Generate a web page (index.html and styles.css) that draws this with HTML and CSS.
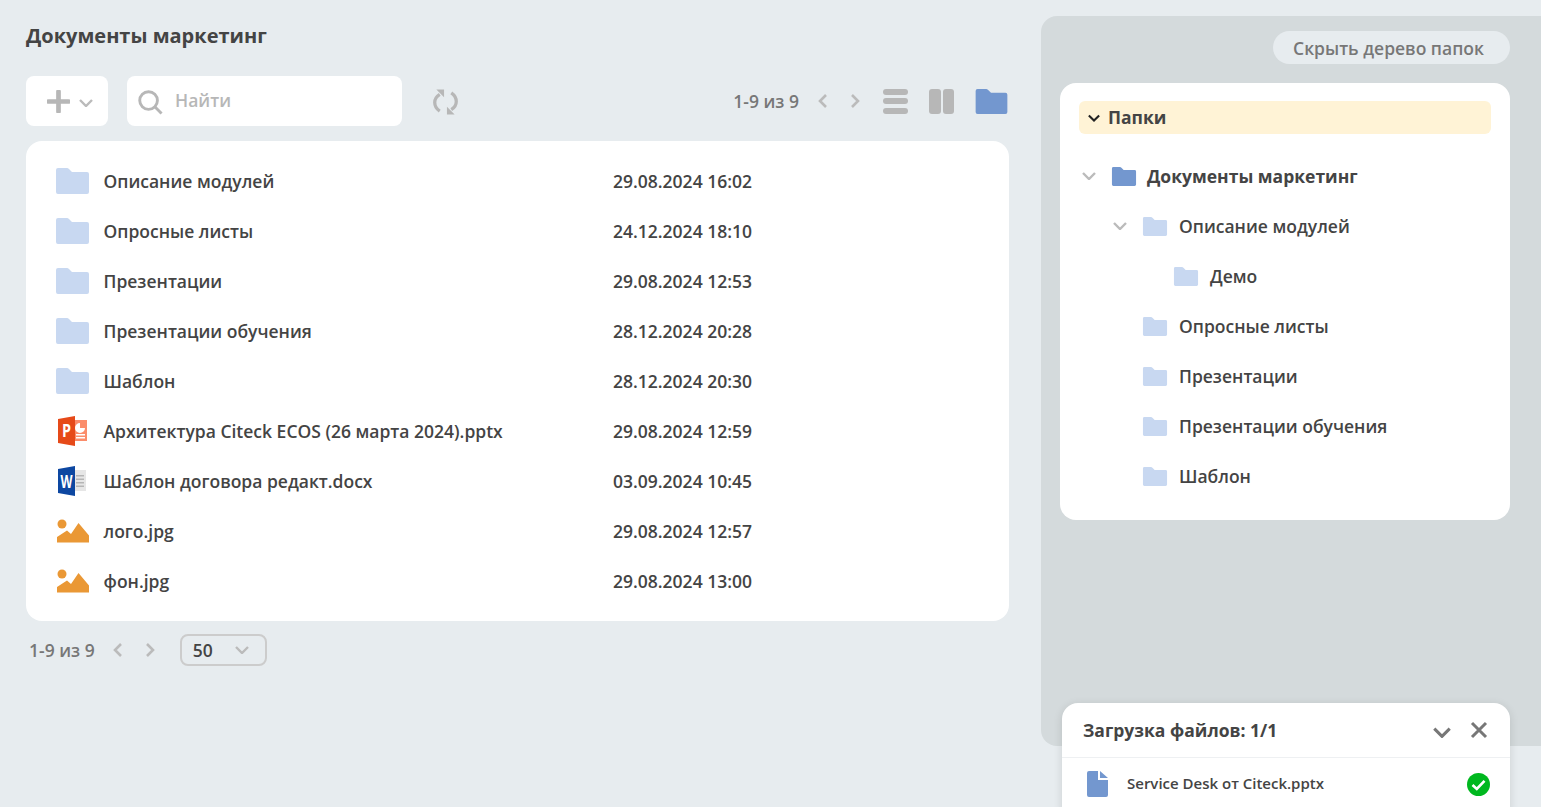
FILE: index.html
```html
<!DOCTYPE html>
<html lang="ru">
<head>
  <meta charset="UTF-8" />
  <meta name="viewport" content="width=device-width, initial-scale=1.0"/>
  <title>Документы маркетинг</title>
  <link rel="stylesheet" href="styles.css">
</head>
<body>
  <svg class="defs" width="0" height="0">
    <symbol id="folder" viewBox="0 0 33 26"><path d="M0 2Q0 0 2 0H11Q12 0 13 1L16 4H31Q33 4 33 6V24Q33 26 31 26H2Q0 26 0 24Z"/></symbol>
    <symbol id="image" viewBox="0 0 32 24"><circle cx="5" cy="5" r="4.500"/><path d="M0 23.500V18L10 11.500L14 15L21.500 4L32 16.500V23.500Z"/></symbol>
    <symbol id="chev-down" viewBox="0 0 14 8"><path d="M1 1L7 7L13 1" fill="none" stroke="currentColor" stroke-width="2.400"/></symbol>
    <symbol id="chev-left" viewBox="0 0 9 14"><path d="M8 1L2 7L8 13" fill="none" stroke="currentColor" stroke-width="2.600"/></symbol>
    <symbol id="chev-right" viewBox="0 0 9 14"><path d="M1 1L7 7L1 13" fill="none" stroke="currentColor" stroke-width="2.600"/></symbol>
  </svg>

  <main class="content">
    <h1 class="page-title">Документы маркетинг</h1>

    <div class="toolbar">
      <button class="add-btn">
        <svg class="plus" viewBox="0 0 22 22"><path d="M11 1.500V20.500M1.500 11H20.500" stroke="currentColor" stroke-width="4.500" stroke-linecap="round"/></svg>
        <svg class="chev chev-add"><use href="#chev-down"/></svg>
      </button>
      <div class="search">
        <svg class="search-icon" viewBox="0 0 26 26"><circle cx="11" cy="11" r="9.200" fill="none" stroke="currentColor" stroke-width="3"/><path d="M17.500 17.500L24.500 24.500" stroke="currentColor" stroke-width="3"/></svg>
        <span>Найти</span>
      </div>
      <svg class="refresh" viewBox="0 0 26 26">
        <path d="M7 5C3 7.500 1.800 10.500 1.800 13.500C1.800 17 3.500 20 7 22.500" fill="none" stroke="currentColor" stroke-width="3.400"/>
        <path d="M19 21C23 18.500 24.200 15.500 24.200 12.500C24.200 9 22.500 6 19 3.500" fill="none" stroke="currentColor" stroke-width="3.400"/>
        <path d="M3.500 0H11.500V8Z M22.500 26H14.500V18Z" fill="currentColor"/>
      </svg>
      <div class="toolbar-right">
        <span class="pager-text">1-9 из 9</span>
        <svg class="chev-h pager-first"><use href="#chev-left"/></svg>
        <svg class="chev-h pager-next"><use href="#chev-right"/></svg>
        <div class="view-list"><i></i><i></i><i></i></div>
        <div class="view-cols"><i></i><i></i></div>
        <svg class="view-folder"><use href="#folder"/></svg>
      </div>
    </div>

    <div class="card file-list">
      <div class="file-row"><svg class="ficon folder-light"><use href="#folder"/></svg><span class="file-name">Описание модулей</span><span class="file-date">29.08.2024 16:02</span></div>
      <div class="file-row"><svg class="ficon folder-light"><use href="#folder"/></svg><span class="file-name">Опросные листы</span><span class="file-date">24.12.2024 18:10</span></div>
      <div class="file-row"><svg class="ficon folder-light"><use href="#folder"/></svg><span class="file-name">Презентации</span><span class="file-date">29.08.2024 12:53</span></div>
      <div class="file-row"><svg class="ficon folder-light"><use href="#folder"/></svg><span class="file-name">Презентации обучения</span><span class="file-date">28.12.2024 20:28</span></div>
      <div class="file-row"><svg class="ficon folder-light"><use href="#folder"/></svg><span class="file-name">Шаблон</span><span class="file-date">28.12.2024 20:30</span></div>
      <div class="file-row">
        <svg class="ficon office" viewBox="0 0 33 30">
          <path d="M18 4H31V25H18Z" fill="#fb8d6b"/>
          <path d="M20 18H29V19.500H20ZM20 21H29V22.500H20Z" fill="#fff"/>
          <path d="M24 7A5 5 0 1 0 29 12H24Z" fill="#fff"/>
          <path d="M2 3L19 0V30L2 27Z" fill="#e64a19"/>
          <text x="6" y="21" class="office-letter" textLength="9" lengthAdjust="spacingAndGlyphs">P</text>
        </svg>
        <span class="file-name">Архитектура Citeck ECOS (26 марта 2024).pptx</span><span class="file-date">29.08.2024 12:59</span>
      </div>
      <div class="file-row">
        <svg class="ficon office" viewBox="0 0 33 30">
          <path d="M18 4H30V25H18Z" fill="#e6e6e6"/>
          <path d="M20 9H28V10.500H20ZM20 12.500H28V14H20ZM20 16H28V17.500H20ZM20 19.500H28V21H20Z" fill="#b5b5b5"/>
          <path d="M2 3L19 0V30L2 27Z" fill="#0d47a1"/>
          <text x="4.500" y="21.500" class="office-letter word-letter" textLength="12" lengthAdjust="spacingAndGlyphs">W</text>
        </svg>
        <span class="file-name">Шаблон договора редакт.docx</span><span class="file-date">03.09.2024 10:45</span>
      </div>
      <div class="file-row"><svg class="ficon image"><use href="#image"/></svg><span class="file-name">лого.jpg</span><span class="file-date">29.08.2024 12:57</span></div>
      <div class="file-row"><svg class="ficon image"><use href="#image"/></svg><span class="file-name">фон.jpg</span><span class="file-date">29.08.2024 13:00</span></div>
    </div>

    <div class="footer-pager">
      <span class="pager-text">1-9 из 9</span>
      <svg class="chev-h pager-first"><use href="#chev-left"/></svg>
      <svg class="chev-h pager-next"><use href="#chev-right"/></svg>
      <div class="page-size"><span>50</span><svg class="chev chev-size"><use href="#chev-down"/></svg></div>
    </div>
  </main>

  <aside class="side">
    <div class="side-top"><button class="hide-tree">Скрыть дерево папок</button></div>
    <div class="card tree">
      <div class="tree-head"><svg class="chev-head"><use href="#chev-down"/></svg><span class="tree-title">Папки</span></div>
      <ul class="tree-list">
        <li class="tree-row lvl0"><svg class="chev tree-chev"><use href="#chev-down"/></svg><svg class="tree-folder folder-dark"><use href="#folder"/></svg><b>Документы маркетинг</b></li>
        <li class="tree-row lvl1"><svg class="chev tree-chev"><use href="#chev-down"/></svg><svg class="tree-folder folder-light"><use href="#folder"/></svg>Описание модулей</li>
        <li class="tree-row lvl2"><span class="tree-chev"></span><svg class="tree-folder folder-light"><use href="#folder"/></svg>Демо</li>
        <li class="tree-row lvl1"><span class="tree-chev"></span><svg class="tree-folder folder-light"><use href="#folder"/></svg>Опросные листы</li>
        <li class="tree-row lvl1"><span class="tree-chev"></span><svg class="tree-folder folder-light"><use href="#folder"/></svg>Презентации</li>
        <li class="tree-row lvl1"><span class="tree-chev"></span><svg class="tree-folder folder-light"><use href="#folder"/></svg>Презентации обучения</li>
        <li class="tree-row lvl1"><span class="tree-chev"></span><svg class="tree-folder folder-light"><use href="#folder"/></svg>Шаблон</li>
      </ul>
    </div>
  </aside>

  <div class="uploads">
    <div class="uploads-head">
      <span>Загрузка файлов: 1/1</span>
      <svg class="uploads-chev"><use href="#chev-down"/></svg>
      <svg class="uploads-close" viewBox="0 0 18 18"><path d="M2 2L16 16M16 2L2 16" stroke="currentColor" stroke-width="3"/></svg>
    </div>
    <div class="uploads-row">
      <svg class="doc-icon" viewBox="0 0 21 26"><path d="M2 0H11V9H21V24Q21 26 19 26H2Q0 26 0 24V2Q0 0 2 0ZM13 0L21 7H13Z"/></svg>
      <span class="uploads-name">Service Desk от Citeck.pptx</span>
      <svg class="ok-icon" viewBox="0 0 23 23"><circle cx="11.500" cy="11.500" r="11.500" fill="#00b81f"/><path d="M5.500 12L9.800 16L17.500 7.800" fill="none" stroke="#fff" stroke-width="2.600"/></svg>
    </div>
  </div>
</body>
</html>
```
FILE: styles.css
```css
* {
  box-sizing: border-box;
}
html, body {
  height: 100%;
}
body {
  margin: 0;
  height: 807px;
  overflow: hidden;
  background-color: #e7ecef;
  color: #444;
  font-family: 'Open Sans', sans-serif;
  font-size: 17.500px;
  display: flex;
  position: relative;
}
.defs {
  position: absolute;
}
.content {
  width: 983px;
  margin-left: 26px;
  flex: none;
}
.page-title {
  margin: 22px 0 0;
  font-size: 20px;
  line-height: 28px;
  font-weight: 700;
  color: #444;
}
.toolbar {
  display: flex;
  align-items: center;
  margin-top: 26px;
  height: 50px;
}
.add-btn {
  width: 82px;
  height: 50px;
  border: none;
  border-radius: 8px;
  background: #fff;
  color: #b7b7b7;
  padding: 0 0 0 21px;
  display: flex;
  align-items: center;
}
.plus {
  width: 23px;
  height: 23px;
}
.chev {
  color: #bbb;
}
.chev-add {
  width: 14px;
  height: 8px;
  margin: 3px 0 0 9px;
}
.search {
  width: 275px;
  height: 50px;
  margin-left: 19px;
  padding-left: 11px;
  border-radius: 8px;
  background: #fff;
  color: #b7b7b7;
  display: flex;
  align-items: center;
}
.search-icon {
  width: 25px;
  height: 25px;
  margin-top: 2px;
}
.search span {
  margin: -2px 0 0 12px;
  font-weight: 600;
}
.refresh {
  width: 25px;
  height: 26px;
  margin: 2px 0 0 31px;
  color: #b7b7b7;
}
.toolbar-right {
  margin-left: auto;
  display: flex;
  align-items: center;
  padding-right: 1px;
}
.pager-text {
  color: #777;
  font-weight: 600;
}
.chev-h {
  width: 9px;
  height: 14px;
  color: #bbb;
}
.pager-first {
  margin-left: 19px;
}
.pager-next {
  margin-left: 24px;
}
.view-list {
  width: 25px;
  height: 25px;
  margin-left: 23px;
  display: flex;
  flex-direction: column;
  justify-content: space-between;
}
.view-list i {
  height: 6px;
  border-radius: 3px;
  background: #b7b7b7;
}
.view-cols {
  width: 25px;
  height: 25px;
  margin-left: 21px;
  display: flex;
  justify-content: space-between;
}
.view-cols i {
  width: 11.500px;
  border-radius: 3px;
  background: #b7b7b7;
}
.view-folder {
  width: 33px;
  height: 25px;
  margin-left: 21px;
  fill: #7397cf;
}
.card {
  background: #fff;
  border-radius: 16px;
}
.file-list {
  margin-top: 15px;
  height: 480px;
  padding: 15px 0 0 30px;
}
.file-row {
  display: flex;
  align-items: center;
  height: 50px;
}
.ficon {
  width: 33px;
  height: 26px;
  flex: none;
}
.folder-light {
  fill: #c8d8f1;
}
.folder-dark {
  fill: #7397cf;
}
.office {
  height: 30px;
}
.office-letter {
  font-family: 'Open Sans', sans-serif;
  font-size: 18px;
  font-weight: 700;
  fill: #fff;
}
.word-letter {
  font-size: 17px;
}
.image {
  width: 32px;
  height: 24px;
  margin-left: 1px;
  fill: #ea9835;
}
.file-name {
  width: 509.500px;
  margin-left: 14.500px;
  flex: none;
  font-weight: 600;
}
.file-date {
  font-weight: 600;
}
.footer-pager {
  display: flex;
  align-items: center;
  margin: 13px 0 0 3px;
  height: 32px;
}
.footer-pager .pager-first {
  margin-left: 18px;
}
.page-size {
  width: 87px;
  height: 32px;
  margin-left: 25px;
  padding: 0 16px 0 11px;
  border: 2px solid #ccc;
  border-radius: 8px;
  display: flex;
  align-items: center;
  justify-content: space-between;
  font-weight: 600;
}
.chev-size {
  width: 14px;
  height: 8px;
}
.side {
  position: absolute;
  left: 1041px;
  top: 16px;
  width: 500px;
  height: 730px;
  background: #d4dadc;
  border-radius: 16px 0 0 16px;
  padding: 15px 31px 0 19px;
}
.side-top {
  display: flex;
  justify-content: flex-end;
}
.hide-tree {
  width: 237px;
  height: 33px;
  padding: 0 6px 0 0;
  border: none;
  border-radius: 17px;
  background: #e7ecef;
  color: #777;
  font-family: inherit;
  font-size: 17.500px;
  font-weight: 600;
}
.tree {
  margin-top: 19px;
  height: 437px;
  padding: 18px 19px 0;
}
.tree-head {
  height: 33px;
  padding-left: 9px;
  background: #fff3d6;
  border-radius: 6px;
  display: flex;
  align-items: center;
  font-weight: 700;
  color: #444;
}
.tree-title {
  margin-top: -2px;
}
.chev-head {
  width: 12px;
  height: 8px;
  margin-right: 8px;
  color: #222;
}
.tree-list {
  list-style: none;
  margin: 17px 0 0;
  padding: 0;
}
.tree-row {
  height: 50px;
  display: flex;
  align-items: center;
  font-weight: 600;
}
.tree-row b {
  font-weight: 700;
}
.lvl0 {
  padding-left: 3px;
}
.lvl1 {
  padding-left: 34px;
}
.lvl2 {
  padding-left: 65px;
}
.tree-chev {
  width: 14px;
  height: 8px;
  flex: none;
}
.tree-folder {
  width: 26px;
  height: 19px;
  margin: 0 11px 0 15px;
  flex: none;
}
.lvl0 .tree-folder {
  margin-right: 10px;
}
.uploads {
  position: absolute;
  left: 1062px;
  top: 703px;
  width: 448px;
  height: 120px;
  background: #fff;
  border-radius: 16px;
  box-shadow: 0 2px 10px rgba(0,0,0,0.12);
}
.uploads-head {
  height: 55px;
  padding: 0 22px 0 21px;
  border-bottom: 1px solid #eef0f2;
  display: flex;
  align-items: center;
  font-weight: 700;
  color: #444;
}
.uploads-head span {
  flex: 1;
}
.uploads-chev {
  width: 18px;
  height: 11px;
  color: #777;
  margin-top: 4px;
}
.uploads-close {
  width: 18px;
  height: 18px;
  margin-left: 19px;
  color: #777;
}
.uploads-row {
  display: flex;
  align-items: center;
  padding: 13px 20px 0 25px;
}
.doc-icon {
  width: 21px;
  height: 26px;
  fill: #7397cf;
}
.uploads-name {
  flex: 1;
  margin: -2px 0 0 19px;
  font-size: 15px;
  font-weight: 600;
}
.ok-icon {
  width: 23px;
  height: 23px;
}
```
